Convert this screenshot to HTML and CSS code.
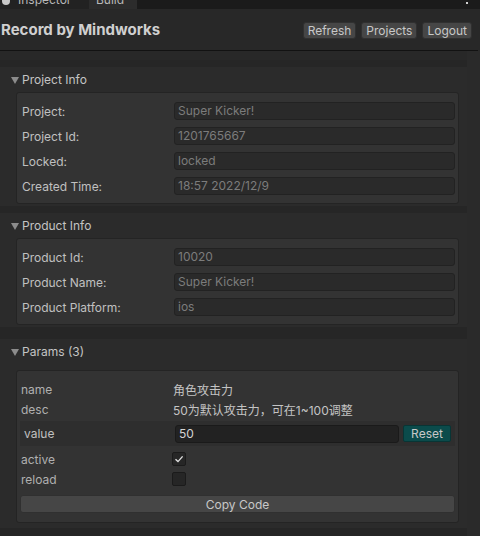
FILE: index.html
```html
<!DOCTYPE html>
<html>
<head>
<meta charset="utf-8">
<link rel="stylesheet" href="styles.css">
</head>
<body>
<div class="tabs">
  <div class="tab tab-inspector">
    <svg class="tab-icon" width="8" height="8" viewBox="0 0 8 8"><circle cx="4" cy="4" r="4" fill="#c8c8c8"/></svg>
    <span class="tab-label">Inspector</span>
  </div>
  <div class="tab tab-build"><span class="tab-label">Build</span></div>
  <div class="tab-spacer"></div>
  <div class="kebab"></div>
</div>
<header class="toolbar">
  <h1 class="title">Record by Mindworks</h1>
  <div class="actions">
    <button class="btn">Refresh</button>
    <button class="btn">Projects</button>
    <button class="btn">Logout</button>
  </div>
</header>
<div class="rule"></div>
<div class="body">
  <main class="content">
    <section class="foldout">
      <div class="foldout-head"><span class="tri"></span><span>Project Info</span></div>
      <div class="box">
        <div class="field-row"><span class="label">Project:</span><span class="field">Super Kicker!</span></div>
        <div class="field-row"><span class="label">Project Id:</span><span class="field">1201765667</span></div>
        <div class="field-row"><span class="label">Locked:</span><span class="field">locked</span></div>
        <div class="field-row"><span class="label">Created Time:</span><span class="field">18:57 2022/12/9</span></div>
      </div>
    </section>
    <section class="foldout">
      <div class="foldout-head"><span class="tri"></span><span>Product Info</span></div>
      <div class="box">
        <div class="field-row"><span class="label">Product Id:</span><span class="field">10020</span></div>
        <div class="field-row"><span class="label">Product Name:</span><span class="field">Super Kicker!</span></div>
        <div class="field-row"><span class="label">Product Platform:</span><span class="field">ios</span></div>
      </div>
    </section>
    <section class="foldout foldout-params">
      <div class="foldout-head"><span class="tri"></span><span>Params (3)</span></div>
      <div class="box box-params">
        <div class="prow"><span class="plabel">name</span><span class="pvalue">角色攻击力</span></div>
        <div class="prow"><span class="plabel">desc</span><span class="pvalue">50为默认攻击力，可在1~100调整</span></div>
        <div class="vband">
          <span class="vlabel">value</span>
          <span class="vinput">50</span>
          <button class="btn btn-reset">Reset</button>
        </div>
        <div class="crow crow-first"><span class="plabel">active</span><span class="check checked"><svg width="10" height="10" viewBox="0 0 10 10"><path d="M1.5 5.2 L4 7.6 L8.6 2.4" fill="none" stroke="#e0e0e0" stroke-width="1.4"/></svg></span></div>
        <div class="crow"><span class="plabel">reload</span><span class="check"></span></div>
        <button class="btn btn-copy">Copy Code</button>
      </div>
    </section>
  </main>
  <div class="gutter"></div>
</div>
</body>
</html>
```

FILE: styles.css
```css
* { box-sizing: border-box; }
html, body {
  margin: 0;
  padding: 0;
  width: 480px;
  height: 536px;
  overflow: hidden;
  background: #282828;
  font-family: Inter, "Noto Sans CJK SC", sans-serif;
  font-size: 12px;
  color: #c4c4c4;
}

.tabs {
  display: flex;
  height: 9px;
  overflow: hidden;
  background: #1b1b1b;
}
.tab {
  display: flex;
  align-items: flex-start;
  height: 9px;
}
.tab-inspector {
  width: 89px;
  padding-left: 2px;
  background: #222222;
}
.tab-icon { margin-top: -3px; margin-right: 8px; flex: none; }
.tab-build {
  width: 48px;
  padding-left: 7px;
  background: #2c2c2c;
}
.tab-label {
  display: block;
  line-height: 12px;
  margin-top: -6px;
  color: #b8b8b8;
  font-size: 12px;
}
.tab-spacer { flex: 1; }
.kebab {
  width: 2px;
  height: 2px;
  margin: 2px 12px 0 0;
  background: #d0d0d0;
}

.toolbar {
  height: 41px;
  display: flex;
  align-items: center;
  justify-content: space-between;
  padding: 0 8px 0 1px;
  background: #282828;
}
.title {
  margin: 0;
  margin-top: -1px;
  font-size: 15px;
  font-weight: 700;
  color: #d0d0d0;
}
.actions {
  display: flex;
  gap: 5px;
  margin-top: 2px;
}
.btn {
  font-family: Inter, "Noto Sans CJK SC", sans-serif;
  font-size: 12px;
  color: #c8c8c8;
  background: #464646;
  border: 1px solid #303030;
  border-radius: 3px;
  height: 17px;
  padding: 0 4px;
  line-height: 15px;
  margin: 0;
}

.rule {
  height: 1px;
  width: 478px;
  background: #121212;
}

.body {
  display: flex;
  height: 485px;
}
.content {
  width: 467px;
  padding-top: 16px;
  background: linear-gradient(#282828 0, #282828 9px, #262626 9px);
  display: flex;
  flex-direction: column;
  gap: 7px;
}
.gutter {
  flex: 1;
  background: #2a2a2a;
}

.foldout {
  background: #2b2b2b;
  padding: 0 8px 2px 16px;
}
.foldout-params { margin-top: 5px; padding-bottom: 5px; }
.foldout-head {
  height: 25px;
  display: flex;
  align-items: center;
  margin-left: -5px;
  gap: 3px;
  color: #c4c4c4;
}
.foldout-params .foldout-head { margin-bottom: 6px; }
.tri {
  width: 0;
  height: 0;
  border-left: 4px solid transparent;
  border-right: 4px solid transparent;
  border-top: 7px solid #8c8c8c;
  margin-top: 1px;
}

.box {
  background: #333333;
  border: 1px solid #242424;
  border-radius: 3px;
  padding: 9px 3px 8px 5px;
  display: flex;
  flex-direction: column;
  gap: 7px;
}
.field-row {
  display: grid;
  grid-template-columns: 152px 1fr;
  align-items: center;
  height: 18px;
}
.label { color: #c0c0c0; }
.field {
  height: 18px;
  line-height: 16px;
  padding: 0 3px;
  background: #2a2a2a;
  border: 1px solid #222222;
  border-radius: 3px;
  color: #7c7c7c;
}

.box-params {
  padding: 8px 3px 9px 3px;
  gap: 0;
}
.prow {
  display: grid;
  grid-template-columns: 152px 1fr;
  height: 20px;
  align-items: center;
  padding-left: 1px;
}
.plabel { color: #b0b0b0; }
.pvalue { color: #c4c4c4; }
.vband {
  display: flex;
  align-items: center;
  height: 25px;
  margin-top: 2px;
  padding: 0 4px;
  background: #2e2e2e;
  gap: 4px;
}
.vlabel {
  width: 147px;
  color: #c0c0c0;
}
.vinput {
  flex: 1;
  height: 18px;
  line-height: 16px;
  padding: 0 3px;
  background: #222222;
  border: 1px solid #1a1a1a;
  border-radius: 3px;
  color: #d4d4d4;
}
.btn-reset {
  width: 48px;
  background: #0b4b4b;
  border-color: #083535;
  border-radius: 2px;
}
.crow {
  display: grid;
  grid-template-columns: 151px 14px;
  height: 20px;
  align-items: center;
  padding-left: 1px;
}
.crow-first { margin-top: 3px; }
.check {
  width: 14px;
  height: 14px;
  background: #262626;
  border: 1px solid #1b1b1b;
  border-radius: 2px;
  display: flex;
  align-items: center;
  justify-content: center;
}
.btn-copy {
  margin-top: 6px;
  height: 18px;
  width: 100%;
}
```
